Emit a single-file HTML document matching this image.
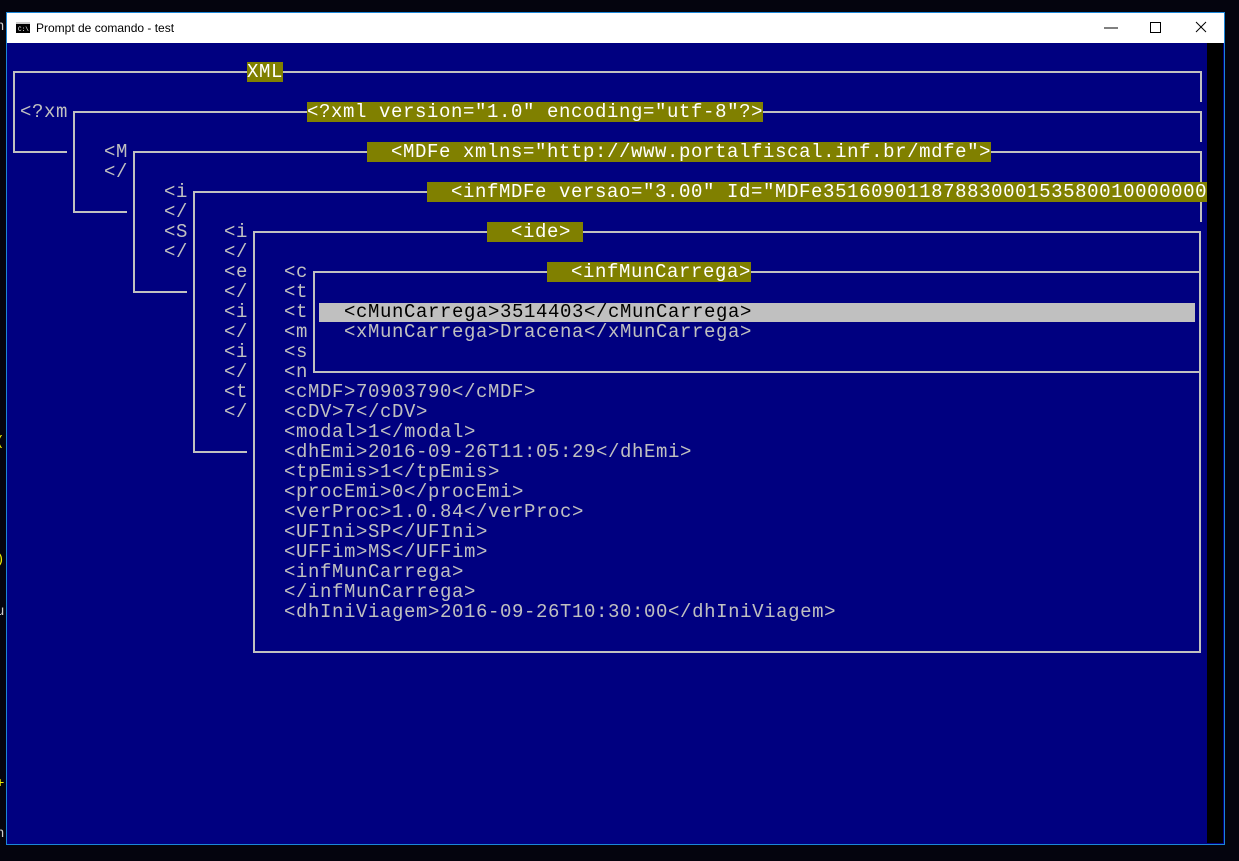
<!DOCTYPE html>
<html><head><meta charset="utf-8"><style>
html,body{margin:0;padding:0;width:1239px;height:861px;overflow:hidden;background:#04040e;}
#win{position:absolute;left:6px;top:12px;width:1217px;height:831px;border:1px solid #1b86d8;background:#000080;}
#title{position:absolute;left:7px;top:13px;width:1217px;height:30px;background:#fff;}
#title .t{position:absolute;left:29px;top:8px;font:12px "Liberation Sans",sans-serif;color:#000;}
#sb{position:absolute;left:1207px;top:43px;width:16px;height:800px;background:#000;}
.c{position:absolute;font:19px/20px "Liberation Mono",monospace;letter-spacing:0.6px;color:#c0c0c0;white-space:pre;height:20px;}
.l{background:#808000;color:#fff;}
svg{position:absolute;left:0;top:0;}
.s{position:absolute;font:14px/14px "Liberation Mono",monospace;white-space:pre;}
</style></head><body>
<div id="win"></div>
<div id="title">
<svg width="20" height="30" style="left:8px;top:0"><rect x="1" y="9" width="14" height="11" fill="#000"/><rect x="1" y="9" width="14" height="2" fill="#ccc"/><text x="3" y="18" font-size="6" fill="#fff" font-family="Liberation Mono">C:\</text></svg>
<div class="t">Prompt de comando - test</div>
<svg width="1217" height="30" style="left:0;top:0">
<line x1="1097" y1="15" x2="1111" y2="15" stroke="#000" stroke-width="1"/>
<rect x="1143.5" y="9.5" width="10" height="10" fill="none" stroke="#000"/>
<line x1="1189" y1="9" x2="1199" y2="19" stroke="#000"/><line x1="1199" y1="9" x2="1189" y2="19" stroke="#000"/>
</svg>
</div>
<div id="sb"></div>
<div class="s" style="left:-4px;top:20px;color:#ccc">n</div>
<div class="s" style="left:-4px;top:435px;color:#ee0">(</div>
<div class="s" style="left:-4px;top:553px;color:#ee0">)</div>
<div class="s" style="left:-4px;top:605px;color:#ccc">u</div>
<div class="s" style="left:-4px;top:777px;color:#ee0">+</div>
<div class="s" style="left:-4px;top:827px;color:#ccc">n</div>

<svg width="1239" height="861">
<g stroke="#c0c0c0" stroke-width="2" fill="none">
<path d="M1201 102V72H14V152H67"/>
<path d="M1201 142V112H74V212H127"/>
<path d="M1201 182V152H134V292H187"/>
<path d="M1201 222V192H194V452H247"/>
<path d="M254 652V232H1200V652Z"/>
<path d="M314 372V272H1200V372Z"/>
</g>
</svg>

<div class="c l" style="left:247px;top:62px">XML</div>
<div class="c" style="left:20px;top:102px">&lt;?xm</div>
<div class="c l" style="left:307px;top:102px">&lt;?xml version="1.0" encoding="utf-8"?&gt;</div>
<div class="c" style="left:104px;top:142px">&lt;M</div>
<div class="c l" style="left:367px;top:142px">  &lt;MDFe xmlns="http://www.portalfiscal.inf.br/mdfe"&gt;</div>
<div class="c" style="left:104px;top:162px">&lt;/</div>
<div class="c" style="left:164px;top:182px">&lt;i</div>
<div class="c l" style="left:427px;top:182px;width:780px;overflow:hidden">  &lt;infMDFe versao="3.00" Id="MDFe35160901187883000153580010000000</div>
<div class="c" style="left:164px;top:202px">&lt;/</div>
<div class="c" style="left:164px;top:222px">&lt;S</div>
<div class="c" style="left:164px;top:242px">&lt;/</div>
<div class="c" style="left:224px;top:222px">&lt;i
&lt;/
&lt;e
&lt;/
&lt;i
&lt;/
&lt;i
&lt;/
&lt;t
&lt;/</div>
<div class="c l" style="left:487px;top:222px">  &lt;ide&gt; </div>
<div class="c" style="left:284px;top:262px">&lt;c
&lt;t
&lt;t
&lt;m
&lt;s
&lt;n
&lt;cMDF&gt;70903790&lt;/cMDF&gt;
&lt;cDV&gt;7&lt;/cDV&gt;
&lt;modal&gt;1&lt;/modal&gt;
&lt;dhEmi&gt;2016-09-26T11:05:29&lt;/dhEmi&gt;
&lt;tpEmis&gt;1&lt;/tpEmis&gt;
&lt;procEmi&gt;0&lt;/procEmi&gt;
&lt;verProc&gt;1.0.84&lt;/verProc&gt;
&lt;UFIni&gt;SP&lt;/UFIni&gt;
&lt;UFFim&gt;MS&lt;/UFFim&gt;
&lt;infMunCarrega&gt;
&lt;/infMunCarrega&gt;
&lt;dhIniViagem&gt;2016-09-26T10:30:00&lt;/dhIniViagem&gt;</div>
<div class="c l" style="left:547px;top:262px">  &lt;infMunCarrega&gt;</div>
<div class="c" style="left:319px;top:303px;width:876px;height:19px;background:#c0c0c0"></div>
<div class="c" style="left:344px;top:302px;color:#000">&lt;cMunCarrega&gt;3514403&lt;/cMunCarrega&gt;</div>
<div class="c" style="left:344px;top:322px">&lt;xMunCarrega&gt;Dracena&lt;/xMunCarrega&gt;</div>
</body></html>
